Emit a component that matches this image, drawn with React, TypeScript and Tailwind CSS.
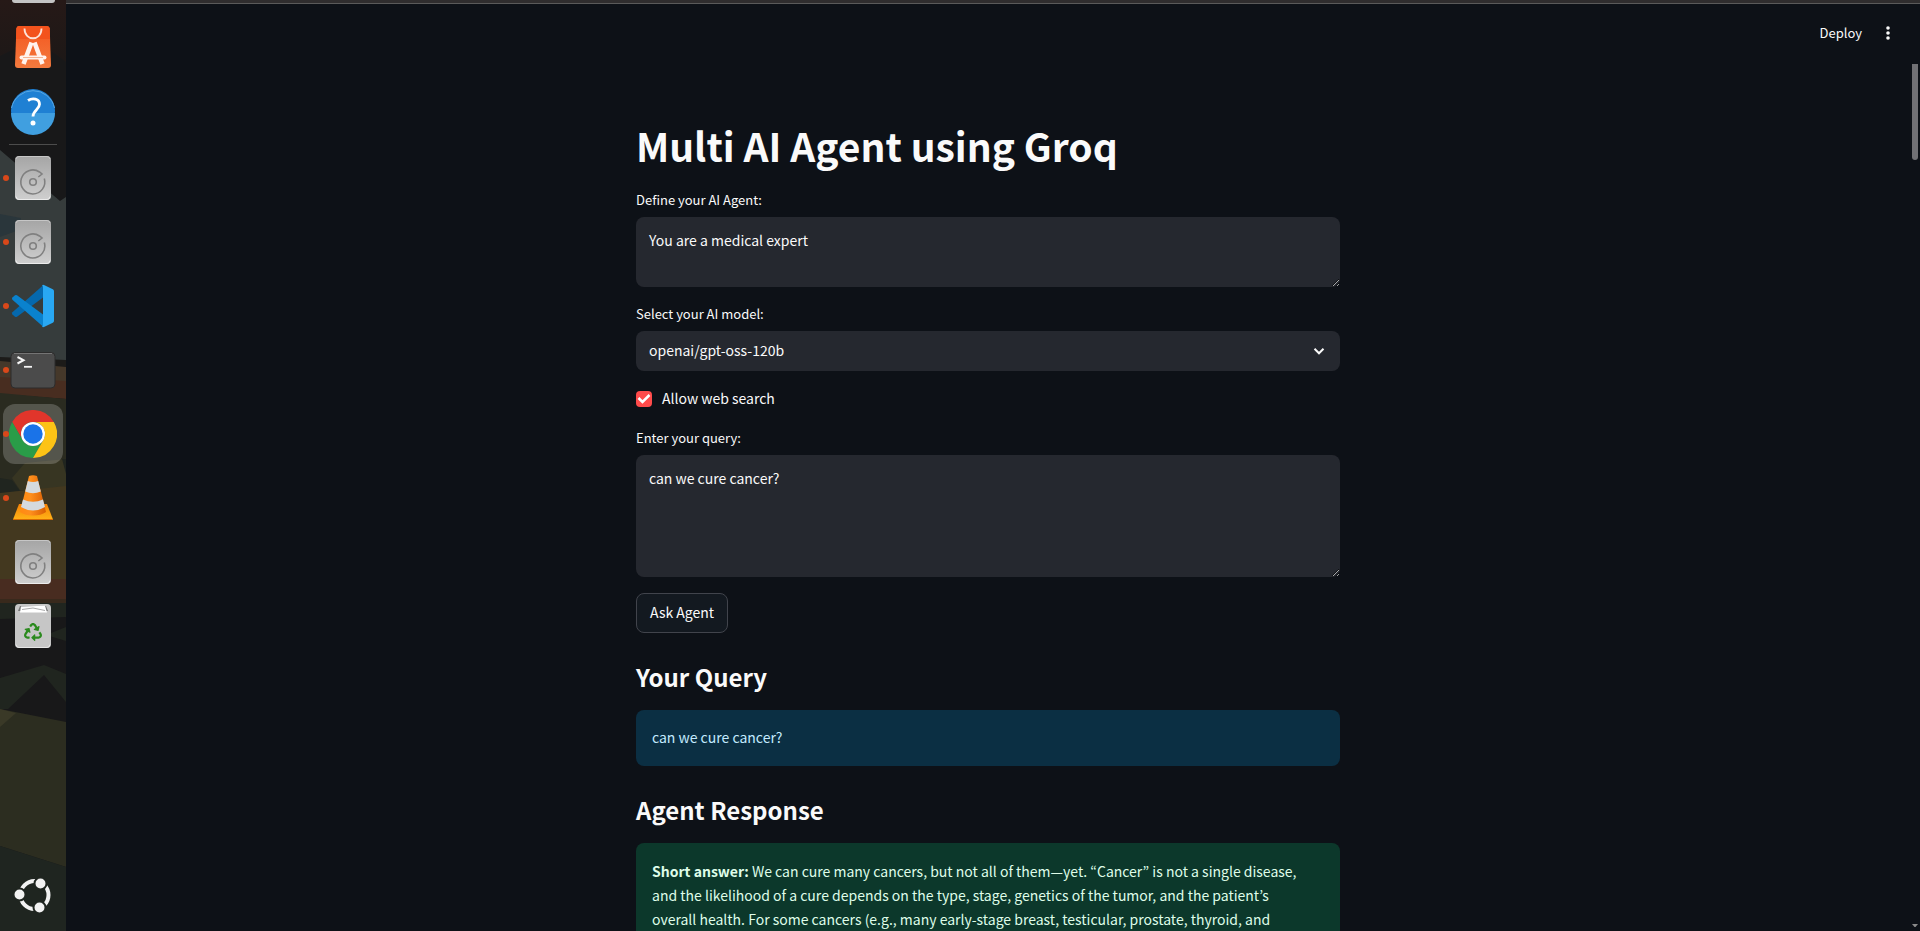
import type { ReactNode } from "react";
import { FaRecycle } from "react-icons/fa";

function Wallpaper() {
  return (
    <svg
      className="absolute inset-0 h-full w-full"
      viewBox="0 0 66 931"
      preserveAspectRatio="none"
      aria-hidden="true"
    >
      <defs>
        <linearGradient id="wall-top" x1="0" y1="0" x2="0" y2="1">
          <stop offset="0" stopColor="#261917" />
          <stop offset="1" stopColor="#1d1817" />
        </linearGradient>
      </defs>
      <rect width="66" height="931" fill="#181819" />
      <path d="M0 0H66V62Q40 40 20 46L0 56Z" fill="url(#wall-top)" />
      <path d="M0 150L60 201L66 197V372H0Z" fill="#363c3c" />
      <path d="M0 214L21 218L19 230L0 237Z" fill="#2a363b" />
      <path d="M0 357L66 360V368L0 362Z" fill="#1c1b19" />
      <path d="M0 361L66 367V382L0 378Z" fill="#45382a" />
      <path d="M0 377L66 381V399L0 394Z" fill="#482d20" />
      <path d="M0 393L66 399V500H0Z" fill="#2a2b20" />
      <path d="M12 478L25 463L66 459V490H20Z" fill="#373522" />
      <path d="M62 459L66 459V474Z" fill="#20251f" />
      <path d="M0 478L12 480L20 491L0 494Z" fill="#20251f" />
      <path d="M0 493L66 486V580H0Z" fill="#43381f" />
      <rect y="579" width="66" height="20" fill="#482c20" />
      <rect y="599" width="66" height="5" fill="#38291c" />
      <path d="M0 603H66V617L0 619Z" fill="#20251f" />
      <path d="M46 635L66 627V641Z" fill="#20251f" />
      <path d="M0 678L44 665L66 674V702L44 675L8 709H0Z" fill="#20251f" />
      <path d="M0 709L66 722V867L0 846Z" fill="#2c2d20" />
      <path d="M0 709L16 713L0 727Z" fill="#3a3927" />
      <path d="M0 846L66 867V931H0Z" fill="#1f2520" />
    </svg>
  );
}

function DriveIcon() {
  return (
    <svg width="48" height="48" viewBox="0 0 48 48" aria-hidden="true">
      <defs>
        <linearGradient id="drive" x1="0" y1="0" x2="0" y2="1">
          <stop offset="0" stopColor="#a5a5a5" />
          <stop offset="1" stopColor="#cfcfcf" />
        </linearGradient>
      </defs>
      <rect x="6" y="2" width="36" height="44" rx="4" fill="url(#drive)" />
      <path d="M7 42.5Q7.500 45.500 10 45.500H38Q40.500 45.500 41 42.500" fill="none" stroke="#ececec" />
      <path d="M7 5Q7.500 2.500 10 2.500H38Q40.500 2.500 41 5" fill="none" stroke="#c6c6c6" />
      <g fill="none" stroke="#808080" strokeWidth="1.600">
        <path d="M35.300 24.500A12 12 0 1 1 30.500 18L33 20L29.300 23" />
        <circle cx="24" cy="28" r="3.300" />
      </g>
    </svg>
  );
}

function StoreIcon() {
  return (
    <svg width="48" height="48" viewBox="0 0 48 48" aria-hidden="true">
      <defs>
        <linearGradient id="store" x1="0" y1="0" x2="0" y2="1">
          <stop offset="0" stopColor="#f4561f" />
          <stop offset="1" stopColor="#f37a3e" />
        </linearGradient>
      </defs>
      <path d="M10 3H38Q40.500 3 40.700 5.500L42 42Q42 45 39 45H9Q6 45 6 42L7.400 5.500Q7.500 3 10 3Z" fill="url(#store)" />
      <path d="M7.400 5.500Q7.500 3 10 3H38Q40.500 3 40.700 5.500L41 16H7Z" fill="#f3531d" />
      <path d="M15.500 5.500C15.500 18.500 32.500 18.500 32.500 5.500" fill="none" stroke="#fde3d8" strokeWidth="1.800" />
      <g fill="none" stroke="#fff3ee">
        <path d="M22.500 19.500L14.500 41M25.500 19.500L33.500 41" strokeWidth="4.500" />
        <path d="M12.500 34.500H35.500" strokeWidth="4" strokeLinecap="round" />
      </g>
      <path d="M14 34.500H34" stroke="#f5b493" strokeWidth="1" />
    </svg>
  );
}

function HelpIcon() {
  return (
    <svg width="48" height="48" viewBox="0 0 48 48" aria-hidden="true">
      <circle cx="24" cy="24" r="22" fill="#1f80d3" />
      <path d="M2 26A22 22 0 0 0 46 26Z" fill="#409fe0" />
      <path d="M2.500 21A22 22 0 0 1 45.500 21" fill="none" stroke="#57a7e4" strokeWidth="1" />
      <path
        d="M19 13.500C23.500 10.500 30.500 11.500 30.500 17.300C30.500 22.500 24 23 24 29.500"
        fill="none"
        stroke="#fff"
        strokeWidth="2.800"
      />
      <circle cx="24" cy="36" r="2.500" fill="#fff" />
    </svg>
  );
}

function CodeIcon() {
  return (
    <svg width="48" height="48" viewBox="0 0 48 48" aria-hidden="true">
      <path d="M34.500 3L3.400 30.300Q2.500 31.500 3.400 32.500L6 34.700Q7 35.400 8 34.700L34 15.500Z" fill="#0568ad" />
      <path d="M34.500 45L3.400 17.700Q2.500 16.500 3.400 15.500L6 13.300Q7 12.600 8 13.300L34 32.500Z" fill="#0a82ce" />
      <path d="M33 3.200Q34 2.500 35.500 3.200L43.800 7.200Q45 7.900 45 9.300V38.700Q45 40.100 43.800 40.800L35.500 44.800Q34 45.500 33 44.800Q34 44.500 34 42V6Q34 3.500 33 3.200Z" fill="#29a8f3" />
    </svg>
  );
}

function TerminalIcon() {
  return (
    <svg width="48" height="48" viewBox="0 0 48 48" aria-hidden="true">
      <rect x="2" y="6.500" width="44" height="35.500" rx="4" fill="#4b4b4b" stroke="#2c2c2c" />
      <path d="M5 7.500H43" stroke="#747474" />
      <path d="M8.500 11L14.500 14.200L8.500 17.500" fill="none" stroke="#f5f5f5" strokeWidth="2" />
      <path d="M15 20.800H23" stroke="#f5f5f5" strokeWidth="1.800" />
    </svg>
  );
}

function ChromeIcon() {
  return (
    <svg width="48" height="48" viewBox="0 0 48 48" aria-hidden="true">
      <path d="M3.200 12A24 24 0 0 1 44.800 12L24 12A12 12 0 0 0 13.600 30Z" fill="#e1352b" />
      <path d="M3.200 12A24 24 0 0 0 24 48L34.400 30A12 12 0 0 1 13.600 30Z" fill="#2a9c48" />
      <path d="M44.800 12A24 24 0 0 1 24 48L34.400 30A12 12 0 0 0 24 12Z" fill="#fdc316" />
      <circle cx="24" cy="24" r="12" fill="#fff" />
      <circle cx="24" cy="24" r="9.700" fill="#1a73e8" />
    </svg>
  );
}

function VlcIcon() {
  return (
    <svg width="48" height="48" viewBox="0 0 48 48" aria-hidden="true">
      <defs>
        <linearGradient id="cone-base" x1="0" y1="0" x2="0" y2="1">
          <stop offset="0" stopColor="#f58105" />
          <stop offset="1" stopColor="#ffb318" />
        </linearGradient>
        <linearGradient id="cone" x1="0" y1="0" x2="1" y2="0">
          <stop offset="0" stopColor="#ff8a12" />
          <stop offset="0.400" stopColor="#ff8f1c" />
          <stop offset="1" stopColor="#d85e04" />
        </linearGradient>
      </defs>
      <path d="M10 30H38L44 45.500H4Z" fill="url(#cone-base)" />
      <path d="M4 45.500H44" stroke="#d66a02" strokeWidth="1" />
      <path d="M20 2Q24 .5 28 2L37 38Q32 41.500 24 41.500Q16 41.500 11 38Z" fill="url(#cone)" />
      <path d="M18.800 7Q24 9 29.200 7L31.800 17.500Q24 21 16.200 17.500Z" fill="#d5dade" />
      <path d="M14 25.500Q24 30 34 25.500L36 33Q24 40 12 33Z" fill="#d5dade" />
    </svg>
  );
}

function TrashIcon() {
  return (
    <svg width="48" height="48" viewBox="0 0 48 48" aria-hidden="true">
      <rect x="6" y="2" width="36" height="44" rx="4" fill="#c6c6c6" />
      <path d="M7 42.500Q7.500 45.500 10 45.500H38Q40.500 45.500 41 42.500" fill="none" stroke="#e6e6e6" />
      <path d="M9 9L11 4H37L39 9Z" fill="#777" />
      <path d="M11 10.500L12 4.500L36 3.800L38 10.500Z" fill="#fff" />
      <path d="M13 7.500L24 6L36 8.500" fill="none" stroke="#aaa" />
      <FaRecycle x="15" y="21" size={18} color="#2b8a1e" />
    </svg>
  );
}

function UbuntuIcon() {
  return (
    <svg width="48" height="48" viewBox="0 0 48 48" aria-hidden="true">
      <circle cx="25.500" cy="25" r="14" fill="none" stroke="#f2f2f2" strokeWidth="4" />
      {[
        [31.5, 13.5],
        [10.5, 24.5],
        [30.5, 37.5],
      ].map(([x, y]) => (
        <circle key={x} cx={x} cy={y} r="6" fill="#f2f2f2" stroke="#1f2520" strokeWidth="2" />
      ))}
    </svg>
  );
}

function DockItem({ label, running, active, children }: { label: string; running?: boolean; active?: boolean; children: ReactNode }) {
  return (
    <button
      type="button"
      aria-label={label}
      className="relative flex h-16 w-full shrink-0 items-center justify-center"
    >
      <span className={active ? "rounded-xl bg-white/20 p-1.5" : "p-1.5"}>{children}</span>
      {running && <span className="absolute left-[3px] top-[29px] size-1.5 rounded-full bg-[#d9481a]" />}
    </button>
  );
}

function Dock() {
  return (
    <aside className="relative w-[66px] shrink-0 overflow-hidden">
      <Wallpaper />
      <nav aria-label="Dock" className="relative flex h-full flex-col">
        <div className="flex h-[15px] shrink-0 justify-center">
          <div className="h-[3px] w-[43px] rounded-b bg-[#c4c4c4]" />
        </div>
        <DockItem label="App Center"><StoreIcon /></DockItem>
        <DockItem label="Help"><HelpIcon /></DockItem>
        <div className="mx-[9px] my-px h-px shrink-0 bg-[#4c4c4c]" />
        <DockItem label="Drive" running><DriveIcon /></DockItem>
        <DockItem label="Drive" running><DriveIcon /></DockItem>
        <DockItem label="Code" running><CodeIcon /></DockItem>
        <DockItem label="Terminal" running><TerminalIcon /></DockItem>
        <DockItem label="Chrome" running active><ChromeIcon /></DockItem>
        <DockItem label="VLC" running><VlcIcon /></DockItem>
        <DockItem label="Drive"><DriveIcon /></DockItem>
        <DockItem label="Trash"><TrashIcon /></DockItem>
        <div className="mt-auto pb-[5px]">
          <DockItem label="Show Apps"><UbuntuIcon /></DockItem>
        </div>
      </nav>
    </aside>
  );
}

const labelClass = "flex h-7 items-start text-[13px] leading-[22px]";
const fieldClass = "block w-full rounded-lg bg-[#25282f] px-[13px] text-sm text-[#fafafa] outline-none";
const headingClass = "pt-2.5 text-2xl font-bold leading-[35px]";

export default function App() {
  return (
    <div
      lang="en"
      className="flex h-screen overflow-hidden bg-[#0d1117] font-['Noto_Sans_CJK_KR','Noto_Sans',sans-serif] text-[#fafafa] [color-scheme:dark]"
    >
      <Dock />
      <div className="relative flex min-w-0 flex-1 flex-col border-t-[3px] border-[#2f2d2e]">
        <header className="flex h-[60px] shrink-0 items-center justify-end gap-3.5 border-t border-[#5a5a5a] pb-0.5 pr-5">
          <button type="button" className="text-[13px] leading-5">Deploy</button>
          <button type="button" aria-label="Main menu" className="flex size-6 items-center justify-center">
            <svg width="24" height="24" viewBox="0 0 24 24" fill="#fafafa" aria-hidden="true">
              <circle cx="12" cy="7" r="1.800" />
              <circle cx="12" cy="12" r="1.800" />
              <circle cx="12" cy="17" r="1.800" />
            </svg>
          </button>
        </header>

        <main className="min-h-0 flex-1 overflow-hidden pr-2.5">
          <div className="mx-auto flex w-full max-w-[704px] flex-col gap-4 pt-14">
            <h1 className="pb-0.5 text-[39px] font-bold leading-[52px]">Multi AI Agent using Groq</h1>

            <div>
              <label htmlFor="agent" className={labelClass}>Define your AI Agent:</label>
              <textarea id="agent" defaultValue="You are a medical expert" className={`${fieldClass} h-[70px] resize-y py-3 leading-[22px]`} />
            </div>

            <div>
              <label htmlFor="model" className={labelClass}>Select your AI model:</label>
              <div className="relative">
                <select id="model" className={`${fieldClass} h-10 appearance-none pb-0.5`}>
                  <option>openai/gpt-oss-120b</option>
                </select>
                <svg
                  className="pointer-events-none absolute right-[13px] top-3 size-4"
                  viewBox="0 0 16 16"
                  fill="none"
                  stroke="#fafafa"
                  strokeWidth="2"
                  aria-hidden="true"
                >
                  <path d="M3.500 5.800L8 10.300L12.500 5.800" />
                </svg>
              </div>
            </div>

            <label className="flex h-6 items-center gap-2.5 text-sm leading-6">
              <span className="relative size-4">
                <input type="checkbox" defaultChecked className="peer block size-4 appearance-none rounded bg-[#25282f] checked:bg-[#ff4b4b]" />
                <svg
                  className="pointer-events-none absolute inset-0 hidden size-4 peer-checked:block"
                  viewBox="0 0 16 16"
                  fill="none"
                  stroke="#fff"
                  strokeWidth="2.500"
                  aria-hidden="true"
                >
                  <path d="M2.500 7L6.500 11L13.500 4" />
                </svg>
              </span>
              <span className="pb-0.5">Allow web search</span>
            </label>

            <div>
              <label htmlFor="query" className={labelClass}>Enter your query:</label>
              <textarea id="query" defaultValue="can we cure cancer?" className={`${fieldClass} h-[122px] resize-y py-3 leading-[22px]`} />
            </div>

            <button type="button" className="h-10 self-start rounded-lg border border-[#41444c] bg-[#131920] px-[13px] pb-0.5 text-sm">
              Ask Agent
            </button>

            <h2 className={headingClass}>Your Query</h2>
            <p className="rounded-lg bg-[#0b2f43] px-4 pb-[17px] pt-[15px] text-sm leading-6 text-[#c3ebff]">can we cure cancer?</p>

            <h2 className={headingClass}>Agent Response</h2>
            <p className="rounded-lg bg-[#0c382b] py-4 pl-4 pr-8 text-sm leading-6 text-[#dffde9]">
              <strong className="font-bold">Short answer:</strong> We can cure many cancers, but not all of them—yet. “Cancer” is not a single disease, and the likelihood of a cure depends on the type, stage, genetics of the tumor, and the patient’s overall health. For some cancers (e.g., many early-stage breast, testicular, prostate, thyroid, and
            </p>
          </div>
        </main>

        <div className="absolute right-0.5 top-[61px] h-24 w-1.5 rounded-b-full bg-[#717175]" />
        <svg className="absolute bottom-1 right-0.5" width="6" height="3" viewBox="0 0 6 3" aria-hidden="true">
          <path d="M0 0H6L3.500 3H2.500Z" fill="#8a8a8a" />
        </svg>
      </div>
    </div>
  );
}
